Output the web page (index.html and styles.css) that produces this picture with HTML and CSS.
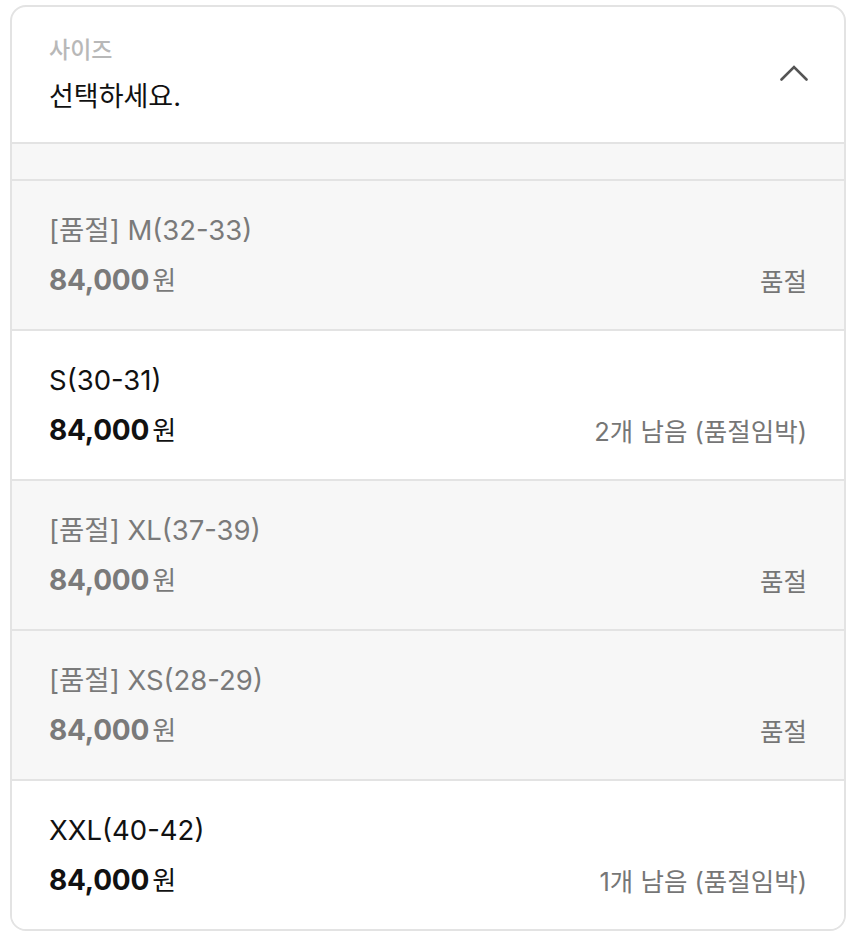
FILE: index.html
```html
<!DOCTYPE html>
<html lang="ko">
<head>
<meta charset="utf-8">
<title>사이즈 선택</title>
<link rel="stylesheet" href="styles.css">
</head>
<body>
  <div class="select">
    <div class="select-head">
      <div class="select-text">
        <div class="select-label">사이즈</div>
        <div class="select-value">선택하세요.</div>
      </div>
      <svg class="chevron" width="28" height="16" viewBox="0 0 28 16" aria-hidden="true">
        <path d="M1.5 14.5 L14 2 L26.5 14.5" fill="none" stroke="#555555" stroke-width="2.6" stroke-linecap="round" stroke-linejoin="miter"/>
      </svg>
    </div>
    <div class="select-gap"></div>
    <ul class="options">
      <li class="option is-soldout">
        <div class="option-name">[품절] M(32-33)</div>
        <div class="option-row">
          <div class="price"><span class="price-num">84,000</span><span class="price-unit">원</span></div>
          <div class="stock">품절</div>
        </div>
      </li>
      <li class="option">
        <div class="option-name">S(30-31)</div>
        <div class="option-row">
          <div class="price"><span class="price-num">84,000</span><span class="price-unit">원</span></div>
          <div class="stock">2개 남음 (품절임박)</div>
        </div>
      </li>
      <li class="option is-soldout">
        <div class="option-name">[품절] XL(37-39)</div>
        <div class="option-row">
          <div class="price"><span class="price-num">84,000</span><span class="price-unit">원</span></div>
          <div class="stock">품절</div>
        </div>
      </li>
      <li class="option is-soldout">
        <div class="option-name">[품절] XS(28-29)</div>
        <div class="option-row">
          <div class="price"><span class="price-num">84,000</span><span class="price-unit">원</span></div>
          <div class="stock">품절</div>
        </div>
      </li>
      <li class="option">
        <div class="option-name">XXL(40-42)</div>
        <div class="option-row">
          <div class="price"><span class="price-num">84,000</span><span class="price-unit">원</span></div>
          <div class="stock">1개 남음 (품절임박)</div>
        </div>
      </li>
    </ul>
  </div>
</body>
</html>
```

FILE: styles.css
```css
* {
  box-sizing: border-box;
}

html, body {
  margin: 0;
  background: #ffffff;
}

body {
  padding: 5px 4px 0 10px;
  font-family: "Inter", "Noto Sans CJK KR", sans-serif;
  color: #111111;
}

.select {
  border: 2px solid #e3e3e3;
  border-radius: 16px;
  overflow: hidden;
  background: #ffffff;
}

.select-head {
  display: flex;
  align-items: center;
  justify-content: space-between;
  padding: 29px 37px 28px 37px;
  border-bottom: 2px solid #e3e3e3;
}

.select-label {
  font-size: 23px;
  line-height: 28px;
  color: #b8b8b8;
  font-weight: 500;
}

.select-value {
  margin-top: 16px;
  font-size: 27px;
  line-height: 34px;
  color: #111111;
}

.chevron {
  display: block;
  margin-right: -1px;
  margin-top: -5px;
}

.select-gap {
  height: 37px;
  background: #f7f7f7;
  border-bottom: 2px solid #e3e3e3;
}

.options {
  list-style: none;
  margin: 0;
  padding: 0;
}

.option {
  height: 150px;
  padding: 32px 37px 0 37px;
  border-bottom: 2px solid #e3e3e3;
  background: #ffffff;
}

.option:last-child {
  border-bottom: none;
  height: 148px;
}

.option.is-soldout {
  background: #f7f7f7;
}

.option-name {
  font-size: 27.5px;
  line-height: 34px;
  color: #111111;
}

.option-row {
  display: flex;
  align-items: center;
  justify-content: space-between;
  margin-top: 14px;
  height: 34px;
}

.price {
  display: flex;
  align-items: baseline;
  gap: 3px;
}

.price-num {
  font-size: 28px;
  font-weight: 700;
  color: #111111;
  letter-spacing: -0.2px;
}

.price-unit {
  font-size: 26px;
  color: #111111;
}

.stock {
  font-size: 25.5px;
  color: #767676;
  margin-top: 3px;
}

.is-soldout .option-name,
.is-soldout .price-num,
.is-soldout .price-unit {
  color: #7a7a7a;
}
```
